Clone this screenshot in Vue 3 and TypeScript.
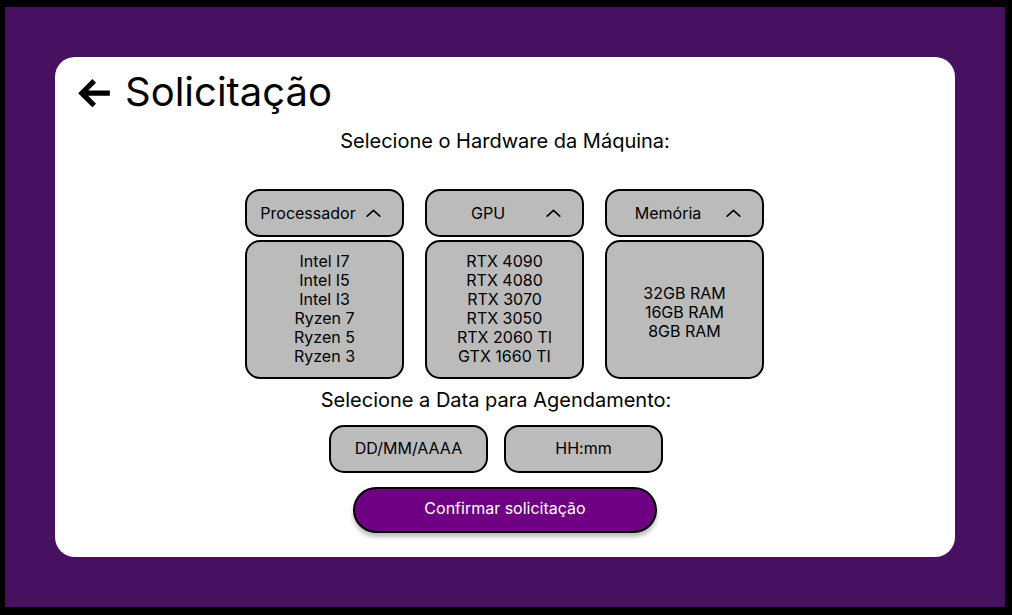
<script setup lang="ts">
import { reactive, ref } from 'vue'

interface HardwareGroup {
  id: string
  label: string
  options: string[]
}

const groups: HardwareGroup[] = [
  {
    id: 'processador',
    label: 'Processador',
    options: ['Intel I7', 'Intel I5', 'Intel I3', 'Ryzen 7', 'Ryzen 5', 'Ryzen 3'],
  },
  {
    id: 'gpu',
    label: 'GPU',
    options: ['RTX 4090', 'RTX 4080', 'RTX 3070', 'RTX 3050', 'RTX 2060 TI', 'GTX 1660 TI'],
  },
  {
    id: 'memoria',
    label: 'Memória',
    options: ['32GB RAM', '16GB RAM', '8GB RAM'],
  },
]

const open = reactive<Record<string, boolean>>({ processador: true, gpu: true, memoria: true })
const selected = reactive<Record<string, string>>({})
const date = ref('')
const time = ref('')

function toggle(id: string): void {
  open[id] = !open[id]
}

function choose(id: string, option: string): void {
  selected[id] = option
}
</script>

<template>
  <div class="screen">
    <main class="card">
      <header class="header">
        <button class="back" type="button" aria-label="Voltar">
          <svg width="32" height="28" viewBox="0 0 32 28" aria-hidden="true">
            <path d="M16.200 1.900 3.900 14.200 16.200 26.500M3.900 14.200H31.800" fill="none" stroke="#000" stroke-width="5.200" />
          </svg>
        </button>
        <h1>Solicitação</h1>
      </header>

      <form class="form" @submit.prevent>
        <h2>Selecione o Hardware da Máquina:</h2>
        <div class="groups">
          <section v-for="group in groups" :key="group.id" class="group">
            <button
              class="box toggle"
              type="button"
              :aria-expanded="open[group.id]"
              :aria-controls="group.id"
              @click="toggle(group.id)"
            >
              <span class="toggle-label">{{ group.label }}</span>
              <svg width="15" height="9" viewBox="0 0 15 9" aria-hidden="true">
                <path
                  d="M1.200 7.200 7.500 1.400 13.800 7.200"
                  fill="none"
                  stroke="#000"
                  stroke-width="1.600"
                  stroke-linecap="round"
                  stroke-linejoin="round"
                />
              </svg>
            </button>
            <ul
              v-show="open[group.id]"
              :id="group.id"
              class="box options"
              :class="{ short: group.options.length < 4 }"
            >
              <li v-for="option in group.options" :key="option">
                <button
                  class="option"
                  type="button"
                  :aria-pressed="selected[group.id] === option"
                  @click="choose(group.id, option)"
                >
                  {{ option }}
                </button>
              </li>
            </ul>
          </section>
        </div>

        <div class="schedule">
          <h2>Selecione a Data para Agendamento:</h2>
          <div class="fields">
            <input v-model="date" class="box field" type="text" placeholder="DD/MM/AAAA" aria-label="Data" />
            <input v-model="time" class="box field" type="text" placeholder="HH:mm" aria-label="Hora" />
          </div>
        </div>

        <button class="confirm" type="submit">Confirmar solicitação</button>
      </form>
    </main>
  </div>
</template>

<style>
body {
  margin: 0;
  background: #000;
}
</style>

<style scoped>
.screen,
.screen * {
  box-sizing: border-box;
}

.screen {
  min-height: calc(100vh - 15px);
  margin: 7px 7px 8px 5px;
  padding: 50px;
  display: flex;
  background: #471061;
  color: #000;
  font-family: Inter, 'Liberation Sans', sans-serif;
  font-size: 16px;
  line-height: 19px;
}

button,
input {
  font: inherit;
  color: inherit;
}

button {
  cursor: pointer;
}

.card {
  flex: 1;
  padding: 12px 23px 24px;
  border-radius: 20px;
  background: #fff;
}

.header {
  display: flex;
  align-items: center;
  gap: 15px;
}

.back {
  display: flex;
  padding: 0;
  border: 0;
  background: none;
}

h1,
h2 {
  margin: 0;
  font-weight: 400;
}

h1 {
  padding-bottom: 2px;
  font-size: 40px;
  line-height: 46px;
}

h2 {
  font-size: 20px;
  line-height: 24px;
}

.form {
  margin-top: 12px;
  display: flex;
  flex-direction: column;
  align-items: center;
}

.groups {
  margin: 36px 1px 0 0;
  display: flex;
  gap: 21px;
}

.group {
  display: flex;
  flex-direction: column;
  gap: 3px;
}

.box {
  width: 159px;
  border: 2px solid #000;
  border-radius: 15px;
  background: #bbb;
}

.toggle {
  height: 48px;
  padding: 0 21px 0 5px;
  display: flex;
  align-items: center;
  gap: 2px;
}

.toggle-label {
  flex: 1;
  text-align: center;
}

.options {
  min-height: 139px;
  margin: 0;
  padding: 10px 0 11px;
  display: flex;
  flex-direction: column;
  justify-content: center;
  list-style: none;
}

.options.short {
  padding-top: 16px;
}

.option {
  display: block;
  width: 100%;
  padding: 0;
  border: 0;
  background: none;
  text-align: center;
}

.schedule {
  margin: 9px 18px 0 0;
  display: flex;
  flex-direction: column;
  align-items: center;
}

.fields {
  margin-top: 13px;
  display: flex;
  gap: 16px;
}

.field {
  height: 48px;
  padding: 0 8px 2px;
  text-align: center;
}

.field::placeholder {
  color: #000;
  opacity: 1;
}

.confirm {
  width: 304px;
  height: 46px;
  margin-top: 14px;
  padding: 0 16px 4px;
  border: 2px solid #000;
  border-radius: 23px;
  background: #700083;
  color: #fff;
  box-shadow: 0 4px 4px rgba(0, 0, 0, 0.25);
}
</style>
